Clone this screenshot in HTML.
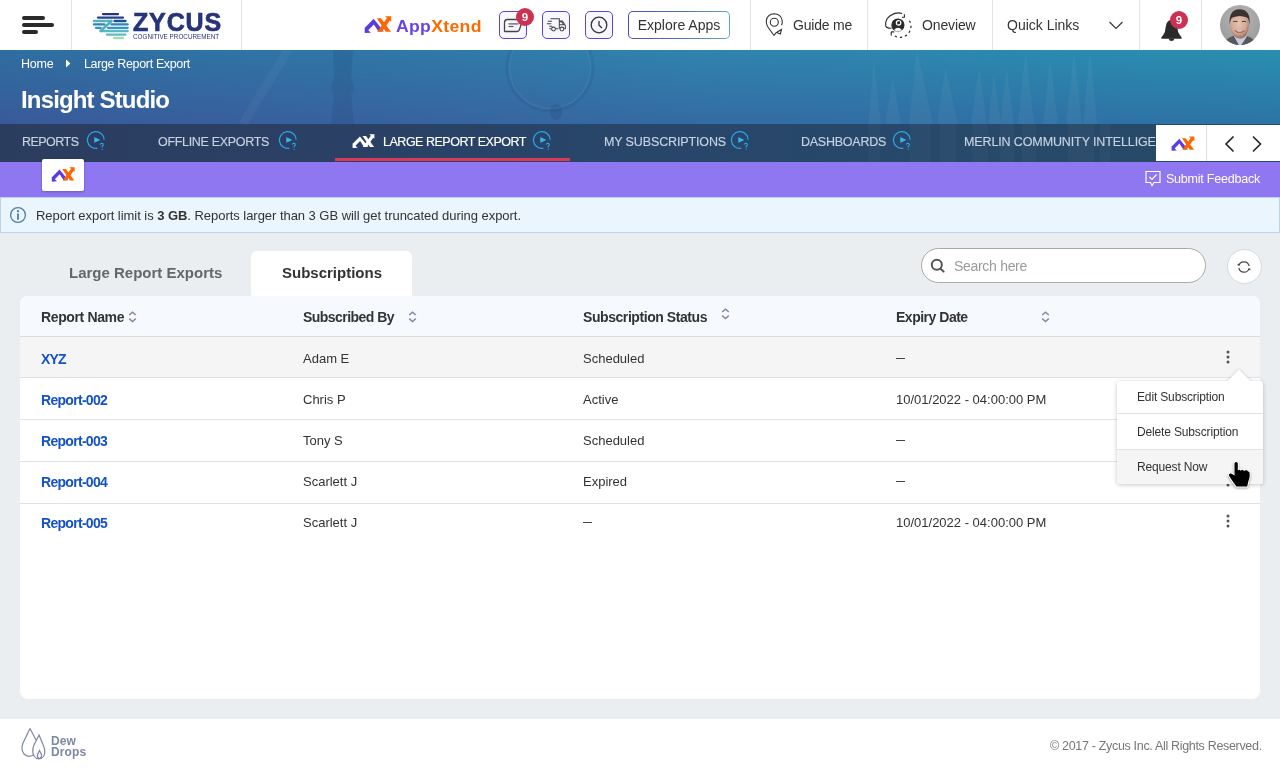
<!DOCTYPE html>
<html><head><meta charset="utf-8">
<style>
*{box-sizing:border-box;margin:0;padding:0}
html,body{width:1280px;height:769px;overflow:hidden;background:#fff;font-family:"Liberation Sans",sans-serif;color:#333}
.a{position:absolute;white-space:nowrap}
#hdr{position:absolute;left:0;top:0;width:1280px;height:50px;background:#fff}
.vd{position:absolute;top:0;width:1px;height:50px;background:#e3e3e3}
#banner{position:absolute;left:0;top:50px;width:1280px;height:112px;background:linear-gradient(90deg,#395a9a 0%,#3766a0 40%,#346ba3 54%,#2c74a6 100%);overflow:hidden}
#banner .shade{position:absolute;left:0;top:0;width:1280px;height:74px;background:linear-gradient(90deg,#2f6ea0 0%,#3079a8 35%,#3183ad 54%,#2b8aaf 80%,#2a8fb0 100%);-webkit-mask-image:linear-gradient(180deg,#000 0%,rgba(0,0,0,0) 100%);mask-image:linear-gradient(180deg,#000 0%,rgba(0,0,0,0) 100%)}
#tabs{position:absolute;left:0;top:74px;width:1280px;height:38px;background:linear-gradient(90deg,#2b3d5f 0%,#2a4064 25%,#28456a 46%,#27496a 75%,#274a68 100%)}
.tab{position:absolute;top:134.8px;font-size:12.5px;line-height:15px;color:#c6d3e2;letter-spacing:0;-webkit-text-stroke:0.15px currentColor}
#purple{position:absolute;left:0;top:162px;width:1280px;height:35px;background:#9077f2}
#info{position:absolute;left:0;top:197px;width:1280px;height:36px;background:#eaf5fd;border:1px solid #b9d5ea}
#main{position:absolute;left:0;top:233px;width:1280px;height:486px;background:#ebeef1}
#card{position:absolute;left:20px;top:296px;width:1240px;height:403px;background:#fff;border-radius:8px}
#footer{position:absolute;left:0;top:719px;width:1280px;height:50px;background:#fff}
.ib{top:11px;width:28px;height:28px;border-radius:5px;border:1px solid #5945d6;background:#f7f7fd;padding:0}
.ib svg{position:absolute;left:0;top:0}
.badge{width:18px;height:18px;border-radius:50%;background:#cc3152;color:#fff;font-size:11.5px;font-weight:bold;text-align:center;line-height:18px}
.th{top:309px;font-size:14px;font-weight:bold;line-height:16px;color:#333}
.tl{letter-spacing:-0.7px;font-size:14px;font-weight:bold;line-height:16px;color:#1552c4}
.td{font-size:13px;line-height:15px;color:#333}
.dash{width:9px;height:1px;background:#444}
.dd{letter-spacing:-0.15px;font-size:12px;line-height:14px;color:#333}
</style></head>
<body style="will-change:transform">
<svg width="0" height="0" style="position:absolute"><defs>
<g id="ax"><path d="M9.67 2.8 L19.8 15.5 L14.4 15.5 L9.87 8.45 L4.19 14.27 L6.9 16.65 L0.7 17 L0.7 11.2 L1.11 11.56 Z" fill="#5a3de2"/><path d="M12.8 2.2 L17.1 2.2 L26.9 15.7 L21.8 15.7 Z" fill="#ff6600"/><path d="M13.2 15.7 L17.9 15.7 L25.9 4.52 L27.25 5.7 L27.25 0.25 L21 0.25 L23 2 Z" fill="#ff6600"/></g>
<g id="axw" fill="#fff"><path d="M9.67 2.8 L19.8 15.5 L14.4 15.5 L9.87 8.45 L4.19 14.27 L6.9 16.65 L0.7 17 L0.7 11.2 L1.11 11.56 Z"/><path d="M12.8 2.2 L17.1 2.2 L26.9 15.7 L21.8 15.7 Z"/><path d="M13.2 15.7 L17.9 15.7 L25.9 4.52 L27.25 5.7 L27.25 0.25 L21 0.25 L23 2 Z"/></g>
<g id="hlp" fill="none" stroke="#2aa6e6" stroke-width="1.2"><path d="M19.2 10.7 A8.4 8.4 0 1 0 12.3 19.3"/><path d="M9.3 8.1 V13.8 L15.3 11.1 Z" fill="#3bb5f0" stroke="none"/><path d="M15.2 15.6 Q15.4 14.2 16.9 14.2 Q18.4 14.3 18.4 15.6 Q18.4 16.6 17.2 17.2 V18.6" stroke-width="1.1"/><circle cx="17.2" cy="20.2" r="0.6" fill="#2aa6e6" stroke="none"/></g>
<g id="srt" fill="none" stroke="#8486a6" stroke-width="1.4"><path d="M2.2 5 L5.5 2.2 L8.8 5 M2.2 8.6 L5.5 11.5 L8.8 8.6"/></g>
<g id="keb" fill="#555"><circle cx="3" cy="3" r="1.5"/><circle cx="3" cy="8" r="1.5"/><circle cx="3" cy="13" r="1.5"/></g>
</defs></svg>
<div id="hdr">
  <div class="vd" style="left:71px"></div>
  <div class="vd" style="left:241px"></div>
  <div class="vd" style="left:750px"></div>
  <div class="vd" style="left:867px"></div>
  <div class="vd" style="left:992px"></div>
  <div class="vd" style="left:1139px"></div>
  <div class="vd" style="left:1201px"></div>
  <!-- hamburger -->
  <div class="a" style="left:22px;top:16px;width:23px;height:3.5px;border-radius:2px;background:#2a2a2a"></div>
  <div class="a" style="left:22px;top:23px;width:32px;height:3.5px;border-radius:2px;background:#2a2a2a"></div>
  <div class="a" style="left:22px;top:30px;width:16px;height:3.5px;border-radius:2px;background:#2a2a2a"></div>
  <!-- zycus logo -->
  <svg class="a" style="left:88px;top:8px" width="46" height="36" viewBox="88 8 46 36">
    <g stroke-linecap="round" stroke-width="2.3" fill="none">
      <line x1="103" y1="14.1" x2="118" y2="14.1" stroke="#27347e"/>
      <line x1="98" y1="17.6" x2="123" y2="17.6" stroke="#24418a"/>
      <line x1="94" y1="21" x2="111" y2="21" stroke="#4fb3c4"/>
      <line x1="114.5" y1="21" x2="125.5" y2="21" stroke="#1f4f8c"/>
      <line x1="94" y1="24.4" x2="104.5" y2="24.4" stroke="#3a80b2"/>
      <line x1="111.5" y1="24.4" x2="127.7" y2="24.4" stroke="#2f86b3"/>
      <line x1="96" y1="27.8" x2="100.6" y2="27.8" stroke="#3597b8"/>
      <line x1="108" y1="27.8" x2="127.7" y2="27.8" stroke="#3499bb"/>
      <line x1="101" y1="31" x2="127.7" y2="31" stroke="#5bb8c4"/>
      <line x1="107" y1="34.7" x2="125.4" y2="34.7" stroke="#63bac4"/>
      <line x1="114" y1="38" x2="123" y2="38" stroke="#a8d8b8"/>
      <line x1="111.5" y1="21" x2="100.5" y2="31" stroke="#4fb0c0" stroke-width="2.6"/>
    </g>
  </svg>
  <div class="a" id="zy" style="left:133px;top:8px;font-size:25px;font-weight:bold;color:#27347a;line-height:28px;letter-spacing:0.85px;-webkit-text-stroke:0.7px #27347a">ZYCUS</div>
  <div class="a" id="cp" style="left:133px;top:33px;font-size:7px;color:#27347a;line-height:8px;letter-spacing:0;transform:scaleX(0.905);transform-origin:0 0">COGNITIVE PROCUREMENT</div>
  <!-- appxtend -->
  <svg class="a" style="left:364px;top:16px" width="28" height="18" viewBox="0 0 28 18"><use href="#ax"/></svg>
  <div class="a" id="axt" style="left:396px;top:16.5px;font-size:16px;font-weight:bold;line-height:20px;letter-spacing:0.3px;transform:scaleX(1.1);transform-origin:0 0"><span style="color:#6a45e6">App</span><span style="color:#ff6a00">Xtend</span></div>
  <!-- icon buttons -->
  <div class="a ib" style="left:499px"><svg width="26" height="26" viewBox="0 0 26 26"><path d="M7.5 7.5 H21.5 Q23 7.5 22.2 9 L19.5 17.5 Q19 19.5 17 19.5 H5 Q4.5 19.5 4.5 19 V10.5 Q4.5 7.5 7.5 7.5 Z" fill="none" stroke="#444" stroke-width="1.3"/><line x1="8.5" y1="11.9" x2="18.5" y2="11.9" stroke="#555" stroke-width="1.2"/><line x1="8.5" y1="14.5" x2="13.5" y2="14.5" stroke="#555" stroke-width="1.2"/></svg></div>
  <div class="a badge" style="left:516px;top:8px">9</div>
  <div class="a ib" style="left:542px"><svg width="26" height="26" viewBox="0 0 26 26" fill="none" stroke="#444" stroke-width="1.05"><path d="M7.5 6.8 H16.3 V16.8 M16.3 9 H19.3 L22.3 13.3 V16.8 H21.2 M6.3 16.8 H8.3 M12.6 16.8 H15.3 M8.8 9.3 H4.8 M8.3 11.8 H3.8 M9.3 14.3 H6.3"/><path d="M16.3 9.6 H18.8 L20.8 12.8 H16.3"/><circle cx="10.5" cy="17" r="1.9"/><circle cx="18.9" cy="17" r="1.9"/></svg></div>
  <div class="a ib" style="left:585px"><svg width="26" height="26" viewBox="0 0 26 26" fill="none" stroke="#333" stroke-width="1.3"><circle cx="13" cy="13" r="7.8"/><path d="M13 9.1 V13.2 L15.9 16"/></svg></div>
  <div class="a" style="left:628px;top:11px;width:102px;height:28px;border-radius:5px;background:linear-gradient(100deg,#4a4db4 0%,#4f72b4 50%,#62aacb 100%)"><div class="a" style="left:1px;top:1px;width:100px;height:26px;border-radius:4px;background:#fff"></div></div>
  <div class="a" id="exa" style="left:628px;top:11px;width:102px;height:28px;font-size:14px;line-height:29px;text-align:center;color:#333">Explore Apps</div>
  <!-- guide me -->
  <svg class="a" style="left:764px;top:12px" width="22" height="26" viewBox="0 0 22 26" fill="none" stroke="#333" stroke-width="1.1"><path d="M10 23.5 L4.2 15.5 Q1.8 12 2.3 8.8 Q3.3 2 10.2 1.8 Q17 2 18.2 8.5 Q18.6 11 17.6 13.3"/><path d="M10 23.5 L12 20.8"/><circle cx="10.3" cy="10.2" r="4"/><path d="M12.5 20.5 L17.5 17.5 L16.3 22 Z"/></svg>
  <div class="a" id="gm" style="letter-spacing:-0.2px;left:793px;top:16.8px;font-size:14px;line-height:16px;color:#333">Guide me</div>
  <!-- oneview -->
  <svg class="a" style="left:880px;top:8px" width="36" height="34" viewBox="0 0 36 34" fill="none" stroke="#2a2a2a" stroke-width="1.1"><path d="M22 5.5 Q16 3.5 9.8 8 Q4.5 12.5 5.8 18 Q6.8 20.5 11.5 20.2"/><path d="M24.4 6.2 V9.3 H22"/><circle cx="17.9" cy="17" r="6.6" fill="#2a2a2a" stroke="none"/><circle cx="18.6" cy="14.8" r="2.2" fill="none" stroke="#fff" stroke-width="1.3"/><path d="M14 22 Q18 17.5 22 22 Q18 24.5 14 22 Z" fill="#fff" stroke="none"/><path d="M17.5 16.5 L19.8 13" stroke="#2a2a2a" stroke-width="0.8"/><path d="M29.5 12.8 A11 11 0 0 1 13.5 27.2" stroke-dasharray="2.2 3" stroke-width="1.2"/><path d="M11.2 23.9 V27.4 M11.2 23.9 H14.2"/></svg>
  <div class="a" id="ov" style="letter-spacing:-0.13px;left:922px;top:16.8px;font-size:14px;line-height:16px;color:#333">Oneview</div>
  <!-- quick links -->
  <div class="a" id="ql" style="left:1007px;top:16.8px;font-size:14px;line-height:16px;color:#333">Quick Links</div>
  <svg class="a" style="left:1108px;top:20px" width="16" height="10" viewBox="0 0 16 10" fill="none" stroke="#333" stroke-width="1.1"><path d="M1.5 2 L8 8.5 L14.5 2"/></svg>
  <!-- bell -->
  <svg class="a" style="left:1160px;top:18px" width="23" height="23" viewBox="0 0 23 23"><path d="M11.5 1.5 Q6.2 2.5 5.6 9.5 Q5.4 14.5 3.2 17 Q1 19.3 1.2 20.2 Q1.5 20.8 3 20.8 H20 Q21.5 20.8 21.8 20.2 Q22 19.3 19.8 17 Q17.6 14.5 17.4 9.5 Q16.8 2.5 11.5 1.5 Z" fill="#2b2b2b"/><path d="M8.6 20.5 Q9 23 11.5 23 Q14 23 14.4 20.5 Z" fill="#2b2b2b"/></svg>
  <div class="a badge" style="left:1170px;top:11px">9</div>
  <!-- avatar -->
  <svg class="a" style="left:1220px;top:5px" width="40" height="40" viewBox="0 0 40 40"><defs><clipPath id="avc"><circle cx="20" cy="20" r="20"/></clipPath><radialGradient id="avbg" cx="50%" cy="35%" r="65%"><stop offset="0" stop-color="#b9b8b8"/><stop offset="1" stop-color="#9c9b9b"/></radialGradient><radialGradient id="skin" cx="45%" cy="40%" r="60%"><stop offset="0" stop-color="#e6c5b5"/><stop offset="0.7" stop-color="#d2a894"/><stop offset="1" stop-color="#9a7468"/></radialGradient></defs><g clip-path="url(#avc)"><rect width="40" height="40" fill="url(#avbg)"/><path d="M3 42 Q5 33 13 31 L27 31 Q35 33 37 42 Z" fill="#55585e"/><path d="M13.5 30.5 L20 42 L27.5 30.5 Z" fill="#c5cedb"/><path d="M14 31 Q20 37 26.5 31 L26 28 H14.5 Z" fill="#b48878"/><ellipse cx="19.6" cy="20.5" rx="9.3" ry="12.6" fill="url(#skin)"/><path d="M9.6 20 Q8.5 4.5 19.5 4.2 Q31 4.5 29.6 20 Q29 13.5 26.8 12.5 Q20 9.3 12.6 12.5 Q10.3 13.5 9.6 20 Z" fill="#3a3230"/><path d="M13.3 16.8 Q15.5 15.8 17.5 16.8 M21.8 16.8 Q24 15.8 26 16.8" stroke="#5a4038" stroke-width="1.1" fill="none"/><path d="M15 25.5 Q19.6 29.5 24.5 25.5" stroke="#a86a5e" stroke-width="1.4" fill="#efdcd6"/></g></svg>
</div>
<div id="banner"><div class="shade"></div>
  <div id="tabs"><div style="position:absolute;left:868px;top:0;width:12px;height:38px;background:rgba(255,255,255,0.025)"></div><div style="position:absolute;left:910px;top:0;width:20px;height:38px;background:rgba(255,255,255,0.025)"></div><div style="position:absolute;left:940px;top:0;width:16px;height:38px;background:rgba(255,255,255,0.025)"></div><div style="position:absolute;left:973px;top:0;width:15px;height:38px;background:rgba(255,255,255,0.025)"></div><div style="position:absolute;left:1000px;top:0;width:14px;height:38px;background:rgba(255,255,255,0.025)"></div><div style="position:absolute;left:1022px;top:0;width:14px;height:38px;background:rgba(255,255,255,0.025)"></div><div style="position:absolute;left:1068px;top:0;width:26px;height:38px;background:rgba(255,255,255,0.025)"></div><div style="position:absolute;left:1100px;top:0;width:10px;height:38px;background:rgba(255,255,255,0.025)"></div></div>
</div>
<!-- banner content -->
<svg class="a" style="left:0;top:50px" width="1280" height="111" viewBox="0 0 1280 111" fill="none">
  <path d="M288 0 L243 74" stroke="rgba(255,255,255,0.035)" stroke-width="9"/>
  <path d="M333 0 H353 L351 30 Q357 38 351 44 L354 74 H331 L334 44 Q328 38 334 30 Z" fill="rgba(25,45,95,0.13)"/>
  <circle cx="550" cy="18" r="43" stroke="rgba(30,60,110,0.12)" stroke-width="3"/>
  <circle cx="550" cy="18" r="40.5" stroke="rgba(255,255,255,0.05)" stroke-width="1.5"/>
  <ellipse cx="556" cy="62" rx="6" ry="8" fill="rgba(25,45,95,0.15)"/>
  <g fill="rgba(255,255,255,0.045)"><path d="M873.8 9.5 L881.0 74.0 L868.5 74.0 Z"/><path d="M892.7 27.0 L901.0 74.0 L885.0 74.0 Z"/><path d="M917.0 0.0 L933.0 74.0 L909.0 74.0 Z"/><path d="M945.5 18.0 L958.0 74.0 L937.0 74.0 Z"/><path d="M979.0 17.0 L987.0 74.0 L971.0 74.0 Z"/><path d="M994.0 24.0 L1001.0 74.0 L988.0 74.0 Z"/><path d="M1006.7 19.0 L1014.0 74.0 L1000.0 74.0 Z"/><path d="M1025.6 0.0 L1034.0 74.0 L1018.0 74.0 Z"/><path d="M1050.0 10.0 L1058.0 74.0 L1043.0 74.0 Z"/><path d="M1074.0 2.0 L1082.0 74.0 L1066.0 74.0 Z"/><path d="M1090.0 0.0 L1097.0 74.0 L1083.0 74.0 Z"/></g>
</svg>
<div class="a" style="left:21px;top:57.3px;font-size:12.5px;line-height:15px;color:#fff;letter-spacing:-0.25px">Home</div>
<svg class="a" style="left:65px;top:59px" width="6" height="9" viewBox="0 0 6 9"><path d="M1 0.5 L5.5 4.5 L1 8.5 Z" fill="#fff"/></svg>
<div class="a" id="bc2" style="letter-spacing:-0.35px;left:84px;top:57.3px;font-size:12.5px;line-height:15px;color:#fff">Large Report Export</div>
<div class="a" id="ist" style="letter-spacing:-0.85px;left:21px;top:86px;font-size:24px;font-weight:bold;line-height:27px;color:#fff">Insight Studio</div>
<!-- tabs -->
<div class="a tab" id="t1" style="letter-spacing:-0.53px;left:22px">REPORTS</div>
<svg class="a" style="left:85px;top:129px" width="22" height="22"><use href="#hlp"/></svg>
<div class="a tab" id="t2" style="letter-spacing:-0.32px;left:158px">OFFLINE EXPORTS</div>
<svg class="a" style="left:277px;top:129px" width="22" height="22"><use href="#hlp"/></svg>
<svg class="a" style="left:352px;top:134px" width="23" height="15" viewBox="0 0 28 18"><use href="#axw"/></svg>
<div class="a tab" id="t3" style="letter-spacing:-0.48px;left:383px;color:#fff">LARGE REPORT EXPORT</div>
<svg class="a" style="left:531px;top:129px" width="22" height="22"><use href="#hlp"/></svg>
<div class="a" style="left:335px;top:158px;width:235px;height:3px;background:#d93a58"></div>
<div class="a tab" id="t4" style="letter-spacing:-0.13px;left:604px">MY SUBSCRIPTIONS</div>
<svg class="a" style="left:729px;top:129px" width="22" height="22"><use href="#hlp"/></svg>
<div class="a tab" id="t5" style="letter-spacing:-0.25px;left:801px">DASHBOARDS</div>
<svg class="a" style="left:891px;top:129px" width="22" height="22"><use href="#hlp"/></svg>
<div class="a" style="left:964px;top:124px;width:192px;height:37px;overflow:hidden"><div class="a tab" id="t6" style="letter-spacing:-0.12px;left:0;top:10.8px">MERLIN COMMUNITY INTELLIGENCE</div></div>
<div class="a" style="left:1156px;top:125px;width:124px;height:36px;background:#fff"></div>
<div class="a" style="left:1206px;top:125px;width:1px;height:36px;background:#ddd"></div>
<svg class="a" style="left:1171px;top:135.5px" width="24" height="16" viewBox="0 0 28 18"><use href="#ax"/></svg>
<svg class="a" style="left:1222px;top:134px" width="42" height="20" viewBox="0 0 42 20" fill="none" stroke="#222" stroke-width="1.6"><path d="M11.5 2.5 L4 10 L11.5 17.5 M31 2.5 L38.5 10 L31 17.5"/></svg>
<div id="purple"></div>
<div class="a" style="left:42px;top:159px;width:42px;height:32px;background:#fff;border-radius:2px;box-shadow:0 1px 3px rgba(0,0,0,0.25)"></div>
<svg class="a" style="left:50.5px;top:166.5px" width="24.5" height="15.5" viewBox="0 0 28 18"><use href="#ax"/></svg>
<svg class="a" style="left:1144px;top:170px" width="18" height="17" viewBox="0 0 18 17" fill="none" stroke="#fff" stroke-width="1.2"><path d="M2 1.5 H16 V12.5 H10 L8 15.5 L6.5 12.5 H2 Z"/><path d="M5.5 7 L8 9.5 L12.5 4.5"/></svg>
<div class="a" id="sf" style="letter-spacing:-0.22px;left:1166px;top:172.3px;font-size:12.5px;line-height:15px;color:#fff">Submit Feedback</div>
<div id="info"></div>
<svg class="a" style="left:9px;top:206px" width="18" height="18" viewBox="0 0 18 18" fill="none" stroke="#4a7fae" stroke-width="1.3"><circle cx="9" cy="9" r="7.4"/><path d="M9 7.4 V13.8" stroke-width="1.8"/><circle cx="9" cy="5.2" r="0.5" fill="#4a7fae"/></svg>
<div class="a" id="inf" style="letter-spacing:-0.04px;left:36px;top:208px;font-size:13px;line-height:15px;color:#333">Report export limit is <b>3 GB</b>. Reports larger than 3 GB will get truncated during export.</div>
<div id="main"></div>
<div class="a" id="lre" style="left:69px;top:264px;font-size:15px;font-weight:bold;line-height:17px;color:#666">Large Report Exports</div>
<div class="a" style="left:251px;top:251px;width:161px;height:50px;background:#fff;border-radius:6px 6px 0 0"></div>
<div class="a" id="sub" style="left:282px;top:264px;font-size:15px;font-weight:bold;line-height:17px;color:#333">Subscriptions</div>
<div class="a" style="left:921px;top:248px;width:285px;height:35px;border:1px solid #a9a9a9;border-radius:18px;background:#fff"></div>
<svg class="a" style="left:929px;top:257px" width="18" height="18" viewBox="0 0 18 18" fill="none" stroke="#555" stroke-width="2"><circle cx="7.8" cy="7.8" r="5"/><path d="M11.5 11.7 L14.6 14.6" stroke-linecap="round"/></svg>
<div class="a" id="srch" style="letter-spacing:-0.3px;left:954px;top:258px;font-size:14px;line-height:16px;color:#9a9a9a">Search here</div>
<div class="a" style="left:1226.5px;top:248.5px;width:35px;height:35px;border:1px solid #d3dae1;border-radius:50%;background:#fff"></div>
<svg class="a" style="left:1234px;top:257px" width="20" height="20" viewBox="0 0 20 20" fill="none" stroke="#4a4a4a" stroke-width="1.15"><path d="M4.8 8.6 A5.4 5.4 0 0 1 15.2 9"/><path d="M15.2 11.4 A5.4 5.4 0 0 1 4.8 11"/><path d="M3.6 7.6 H5.8" stroke-width="1.5"/><path d="M14.2 12.4 H16.4" stroke-width="1.5"/></svg>
<div id="card">
  <div class="a" style="left:0;top:0;width:1240px;height:41px;background:#f6f9fd;border-radius:8px 8px 0 0;border-bottom:1px solid #d9dee5"></div>
  <div class="a" style="left:0;top:41px;width:1240px;height:41px;background:#f5f5f5;border-bottom:1px solid #dde3ea"></div>
  <div class="a" style="left:0;top:123px;width:1240px;height:1px;background:#dde3ea"></div>
  <div class="a" style="left:0;top:165px;width:1240px;height:1px;background:#dde3ea"></div>
  <div class="a" style="left:0;top:207px;width:1240px;height:1px;background:#dde3ea"></div>
</div>
<div class="a th" id="h1" style="letter-spacing:-0.37px;left:41px">Report Name</div>
<svg class="a" style="left:127px;top:310px" width="10" height="14"><use href="#srt"/></svg>
<div class="a th" id="h2" style="letter-spacing:-0.54px;left:303px">Subscribed By</div>
<svg class="a" style="left:407px;top:310px" width="10" height="14"><use href="#srt"/></svg>
<div class="a th" id="h3" style="letter-spacing:-0.43px;left:583px">Subscription Status</div>
<svg class="a" style="left:720px;top:307px" width="10" height="14"><use href="#srt"/></svg>
<div class="a th" id="h4" style="letter-spacing:-0.49px;left:896px">Expiry Date</div>
<svg class="a" style="left:1040px;top:310px" width="10" height="14"><use href="#srt"/></svg>
<div class="a tl" style="left:41px;top:350.7px;letter-spacing:-0.8px">XYZ</div>
<div class="a td" style="left:303px;top:350.7px">Adam E</div>
<div class="a td" style="left:583px;top:350.7px">Scheduled</div>
<div class="a dash" style="left:896px;top:358px"></div>
<svg class="a" style="left:1225px;top:349px" width="6" height="16"><use href="#keb"/></svg>
<div class="a tl" style="left:41px;top:391.7px">Report-002</div>
<div class="a td" style="left:303px;top:391.7px">Chris P</div>
<div class="a td" style="left:583px;top:391.7px">Active</div>
<div class="a td" style="left:896px;top:391.7px">10/01/2022 - 04:00:00 PM</div>
<svg class="a" style="left:1225px;top:390px" width="6" height="16"><use href="#keb"/></svg>
<div class="a tl" style="left:41px;top:432.7px">Report-003</div>
<div class="a td" style="left:303px;top:432.7px">Tony S</div>
<div class="a td" style="left:583px;top:432.7px">Scheduled</div>
<div class="a dash" style="left:896px;top:440px"></div>
<svg class="a" style="left:1225px;top:431px" width="6" height="16"><use href="#keb"/></svg>
<div class="a tl" style="left:41px;top:473.7px">Report-004</div>
<div class="a td" style="left:303px;top:473.7px">Scarlett J</div>
<div class="a td" style="left:583px;top:473.7px">Expired</div>
<div class="a dash" style="left:896px;top:481px"></div>
<svg class="a" style="left:1225px;top:472px" width="6" height="16"><use href="#keb"/></svg>
<div class="a tl" style="left:41px;top:514.7px">Report-005</div>
<div class="a td" style="left:303px;top:514.7px">Scarlett J</div>
<div class="a dash" style="left:583px;top:522px"></div>
<div class="a td" style="left:896px;top:514.7px">10/01/2022 - 04:00:00 PM</div>
<svg class="a" style="left:1225px;top:513px" width="6" height="16"><use href="#keb"/></svg>
<!-- dropdown -->
<svg class="a" style="left:1213px;top:354px" width="52" height="40" viewBox="0 0 52 40"><defs><filter id="nsh" x="-50%" y="-50%" width="200%" height="200%"><feGaussianBlur stdDeviation="1.5"/></filter></defs><path d="M13 28 L26 15 L39 28 Z" fill="rgba(0,0,0,0.16)" filter="url(#nsh)"/></svg>
<div class="a" style="left:1117px;top:381px;width:146px;height:103px;background:#fff;border-radius:3px;box-shadow:0 1px 4px rgba(0,0,0,0.22)"></div>
<svg class="a" style="left:1223px;top:364px" width="32" height="20" viewBox="0 0 32 20"><path d="M3.5 18 L16 5.5 L28.5 18 Z" fill="#fff"/></svg>
<div class="a" style="left:1117px;top:413px;width:146px;height:1px;background:#dde3ea"></div>
<div class="a" style="left:1117px;top:449px;width:146px;height:35px;background:#f5f5f5;border-top:1px solid #dde3ea;border-radius:0 0 3px 3px"></div>
<div class="a dd" id="d1" style="left:1137px;top:390px">Edit Subscription</div>
<div class="a dd" id="d2" style="left:1137px;top:425px">Delete Subscription</div>
<div class="a dd" id="d3" style="left:1137px;top:460px">Request Now</div>
<!-- cursor -->
<svg class="a" style="left:1220px;top:452px;filter:drop-shadow(0.5px 1.5px 1px rgba(0,0,0,0.35))" width="40" height="44" viewBox="0 0 40 44"><path d="M14.5 11.6 Q14.5 10 16.15 10 Q17.8 10 17.8 11.6 V18.4 Q18.6 17.6 19.6 17.8 Q20.6 18 20.9 18.9 Q21.6 17.7 22.8 17.9 Q23.8 18.1 24.1 19.1 Q24.9 18 26.3 18.2 Q27.5 18.3 27.9 19.2 Q29.8 19.6 29.7 21.8 V24 Q29.5 26.5 28.3 29.5 L27.2 34.6 H16.4 L13.5 30.5 L9.3 24.2 Q8.5 22.8 9.3 21.9 Q10.3 21 11.6 21.8 L14.5 23.5 Z" fill="#000" stroke="#fff" stroke-width="2" stroke-linejoin="round" paint-order="stroke"/></svg>
<div id="footer"></div>
<svg class="a" style="left:20px;top:727px" width="28" height="34" viewBox="0 0 28 34" fill="none" stroke="#7d87a6" stroke-width="1.2"><path d="M10 1.5 L3 16 Q0.5 22.5 4 27 Q8 31 13.5 28"/><path d="M10 1.5 L16 13"/><path d="M19 8 L14 18 Q11.5 24 14 29 Q17 33 21 31.5 Q26 29 24.5 22 Q24 19.5 23 17.5 Z"/><path d="M19.5 23.5 L17.5 27.5 Q17 31 19.5 31.5 Q22 31 21.5 27.5 Z"/></svg>
<div class="a" id="dew" style="left:51px;top:735.5px;font-size:12px;font-weight:bold;line-height:11.5px;color:#7d87a6;letter-spacing:0.1px">Dew<br>Drops</div>
<div class="a" id="cpy" style="letter-spacing:-0.32px;left:1050px;top:738.5px;font-size:12.5px;line-height:15px;color:#777">© 2017 - Zycus Inc. All Rights Reserved.</div>
</body></html>
